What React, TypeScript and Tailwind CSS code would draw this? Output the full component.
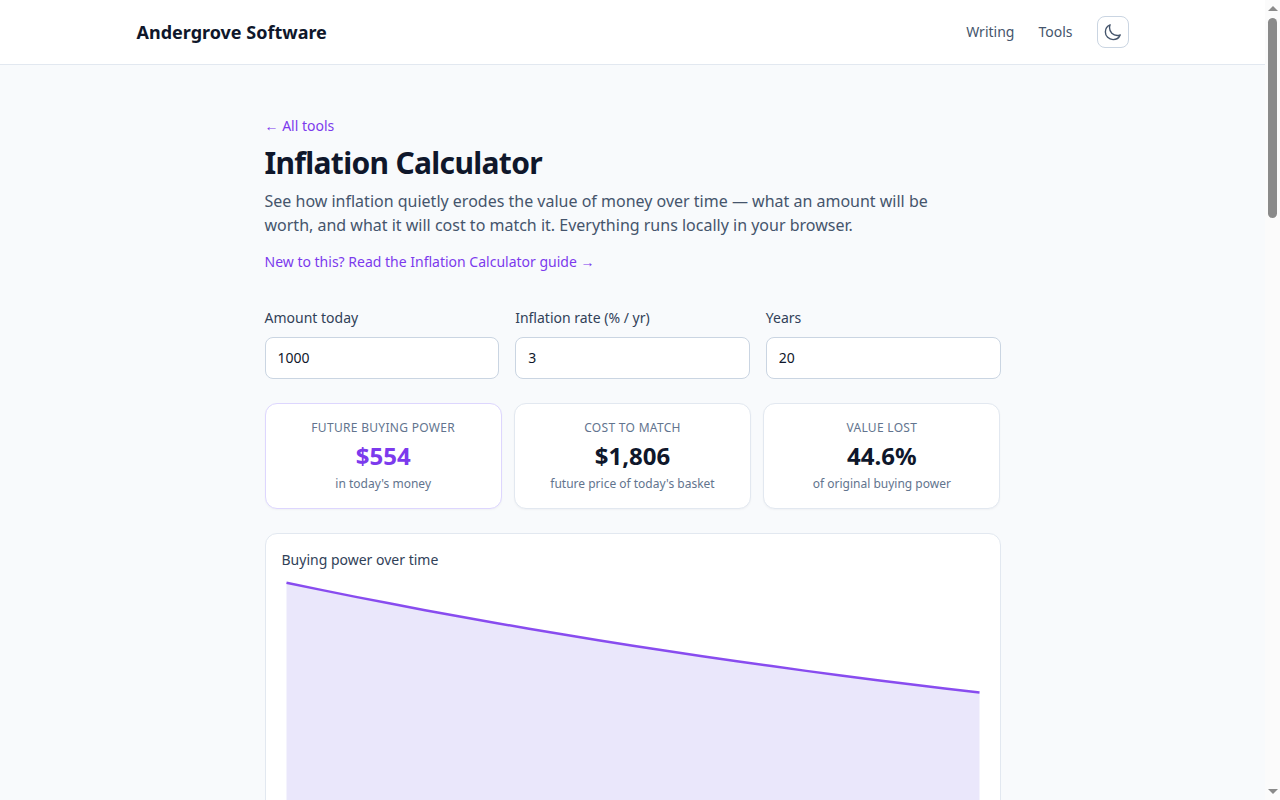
const amount = 1000;
const rate = 3;
const years = 20;

function Field({ label, value }: { label: string; value: string }) {
  return (
    <label className="block">
      <span className="mb-[9px] block text-sm text-slate-700">{label}</span>
      <input
        defaultValue={value}
        className="h-[42px] w-full rounded-lg border border-slate-300 bg-white px-3 pb-[2px] text-sm text-slate-900"
      />
    </label>
  );
}

function Stat({
  label,
  value,
  note,
  accent,
}: {
  label: string;
  value: string;
  note: string;
  accent?: boolean;
}) {
  return (
    <div
      className={
        accent
          ? "rounded-xl border border-[#ddd6fe] bg-white p-4 text-center shadow-[0_1px_2px_rgba(15,23,42,0.04)]"
          : "rounded-xl border border-slate-200 bg-white p-4 text-center shadow-[0_1px_2px_rgba(15,23,42,0.04)]"
      }
    >
      <div className="text-xs uppercase tracking-wide text-slate-500">{label}</div>
      <div className={accent ? "mt-1 text-2xl font-bold text-[#7c3aed]" : "mt-1 text-2xl font-bold text-slate-900"}>
        {value}
      </div>
      <div className="mt-1 text-xs text-slate-500">{note}</div>
    </div>
  );
}

function Chart() {
  const top = 4.5;
  const k = 246.5;
  const pts = Array.from({ length: years + 1 }, (_, t) => {
    const x = 4.5 + (694 * t) / years;
    const y = top + k * (1 - 1 / Math.pow(1 + rate / 100, t));
    return `${x.toFixed(1)},${y.toFixed(1)}`;
  });
  const bottom = top + k;
  return (
    <svg viewBox="0 0 703 280" className="mt-2 block h-[280px] w-full">
      <polygon points={`4.5,${bottom} ${pts.join(" ")} 698.5,${bottom}`} fill="#eae7fb" />
      <polyline points={pts.join(" ")} fill="none" stroke="#7c3aed" strokeWidth="2.5" opacity="0.9" />
    </svg>
  );
}

// the browser's classic scrollbar from the reference, 15px wide
function ScrollRail() {
  return (
    <aside className="flex w-[15px] shrink-0 flex-col items-center bg-[#fbfbfb]">
      <div className="mt-[6px] h-0 w-0 border-x-[5px] border-b-[5px] border-x-transparent border-b-[#8a8a8a]" />
      <div className="mt-[7px] h-[200px] w-[9px] rounded-full bg-[#8a8a8a]" />
      <div className="mt-auto mb-[6px] h-0 w-0 border-x-[5px] border-t-[5px] border-x-transparent border-t-[#8a8a8a]" />
    </aside>
  );
}

export default function App() {
  return (
    <div className="flex h-screen overflow-hidden bg-slate-50 font-['Noto_Sans',sans-serif] text-slate-900">
      <div className="min-w-0 flex-1 overflow-hidden">
        <header className="border-b border-slate-200 bg-white">
          <div className="mx-auto flex h-16 max-w-5xl items-center justify-between px-4">
            <a href="#" className="text-lg font-bold text-slate-900">
              Andergrove Software
            </a>
            <nav className="flex items-center gap-6 text-sm text-slate-600">
              <a href="#">Writing</a>
              <a href="#">Tools</a>
              <button className="flex h-8 w-8 items-center justify-center rounded-lg border border-slate-300 text-slate-600">
                <svg
                  width="19"
                  height="19"
                  viewBox="0 0 24 24"
                  fill="none"
                  stroke="currentColor"
                  strokeWidth="1.75"
                  strokeLinecap="round"
                  strokeLinejoin="round"
                >
                  <path d="M21.752 15.002A9.72 9.72 0 0 1 18 15.75c-5.385 0-9.75-4.365-9.75-9.75 0-1.33.266-2.597.748-3.752A9.753 9.753 0 0 0 3 11.25C3 16.635 7.365 21 12.75 21a9.753 9.753 0 0 0 9.002-5.998Z" />
                </svg>
              </button>
            </nav>
          </div>
        </header>

        <main className="mx-auto max-w-3xl px-4 py-12">
          <a href="#" className="text-sm text-[#7c3aed]">
            ← All tools
          </a>
          <h1 className="mt-2 text-3xl font-bold tracking-[-0.0225em] text-slate-900">Inflation Calculator</h1>
          <p className="mt-2 max-w-2xl text-base text-slate-600">
            See how inflation quietly erodes the value of money over time — what an amount will be worth, and what it
            will cost to match it. Everything runs locally in your browser.
          </p>
          <p className="mt-[15px] text-sm">
            <a href="#" className="text-[#7c3aed]">
              New to this? Read the Inflation Calculator guide →
            </a>
          </p>

          <div className="mt-9 grid grid-cols-3 gap-4">
            <Field label="Amount today" value={String(amount)} />
            <Field label="Inflation rate (% / yr)" value={String(rate)} />
            <Field label="Years" value={String(years)} />
          </div>

          <div className="mt-6 grid grid-cols-3 gap-3">
            <Stat label="Future buying power" value="$554" note="in today's money" accent />
            <Stat label="Cost to match" value="$1,806" note="future price of today's basket" />
            <Stat label="Value lost" value="44.6%" note="of original buying power" />
          </div>

          <div className="mt-6 rounded-xl border border-slate-200 bg-white p-4">
            <div className="text-sm text-slate-700">Buying power over time</div>
            <Chart />
          </div>
        </main>
      </div>
      <ScrollRail />
    </div>
  );
}
